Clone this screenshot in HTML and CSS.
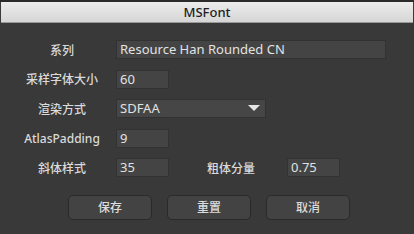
FILE: index.html
```html
<!DOCTYPE html>
<html>
<head>
<meta charset="utf-8">
<link rel="stylesheet" href="styles.css">
</head>
<body>
<div class="window">
  <div class="titlebar">MSFont</div>
  <div class="form">
    <div class="row">
      <div class="label">系列</div>
      <div class="field wide">Resource Han Rounded CN</div>
    </div>
    <div class="row">
      <div class="label">采样字体大小</div>
      <div class="field short">60</div>
    </div>
    <div class="row">
      <div class="label">渲染方式</div>
      <div class="field select">SDFAA<span class="arrow"></span></div>
    </div>
    <div class="row">
      <div class="label">AtlasPadding</div>
      <div class="field short">9</div>
    </div>
    <div class="row">
      <div class="label">斜体样式</div>
      <div class="field short">35</div>
      <div class="label2">粗体分量</div>
      <div class="field short">0.75</div>
    </div>
  </div>
  <div class="buttons">
    <div class="btn">保存</div>
    <div class="btn">重置</div>
    <div class="btn">取消</div>
  </div>
</div>
</body>
</html>
```

FILE: styles.css
```css
html, body {
  margin: 0;
  padding: 0;
  background: #393939;
  width: 414px;
  height: 234px;
  overflow: hidden;
}
.window {
  font-family: "Noto Sans", "Noto Sans CJK SC", sans-serif;
  font-size: 12px;
  color: #dadada;
  border-top: 2px solid #2b2b2b;
}
.titlebar {
  margin: 0 1px;
  height: 20px;
  background: linear-gradient(#ececec, #d6d6d6);
  border-bottom: 1px solid #9a9a9a;
  color: #1e1e1e;
  font-size: 13px;
  font-weight: 500;
  text-align: center;
  line-height: 20px;
}
.form {
  display: flex;
  flex-direction: column;
  gap: 10.5px;
  padding-top: 17px;
}
.row {
  display: flex;
  align-items: center;
  height: 19px;
}
.label {
  width: 84px;
  margin-left: 20px;
  margin-right: 12px;
  text-align: center;
  font-weight: 500;
}
.label2 {
  width: 48px;
  margin-left: 38px;
  margin-right: 32px;
  font-weight: 500;
}
.field {
  box-sizing: border-box;
  height: 19px;
  background: #444444;
  border: 1px solid #323232;
  color: #e2e2e2;
  font-size: 13px;
  line-height: 17px;
  padding-left: 3px;
  position: relative;
}
.wide { width: 270px; }
.short { width: 53px; }
.select {
  width: 150px;
  background: #464646;
}
.arrow {
  position: absolute;
  right: 5px;
  top: 5px;
  width: 0;
  height: 0;
  border-left: 6px solid transparent;
  border-right: 6px solid transparent;
  border-top: 6px solid #e8e8e8;
}
.buttons {
  display: flex;
  gap: 15px;
  margin-top: 18px;
  padding-left: 68px;
}
.btn {
  box-sizing: border-box;
  width: 84px;
  height: 25px;
  background: #434343;
  border: 1px solid #2a2a2a;
  border-radius: 5px;
  text-align: center;
  line-height: 23px;
  font-weight: 500;
  color: #dcdcdc;
}
```
